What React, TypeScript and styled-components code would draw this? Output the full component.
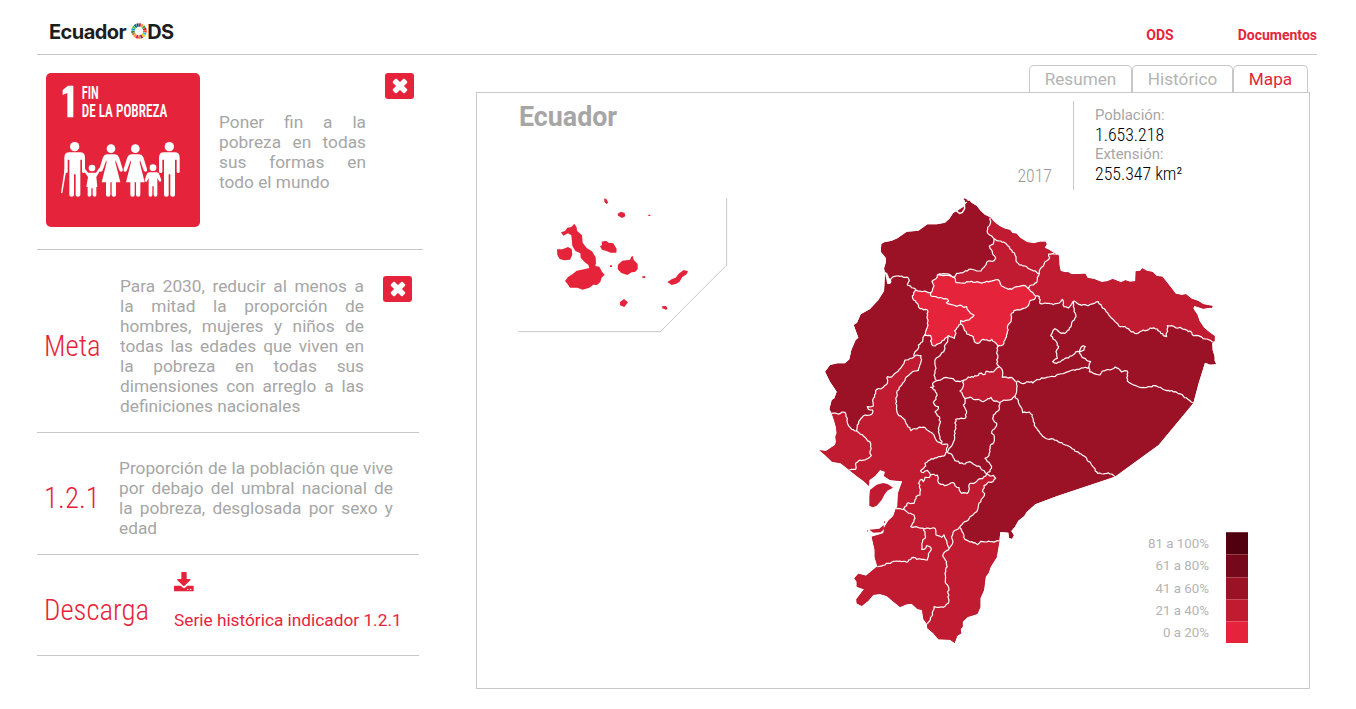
import React from 'react';
import styled, { createGlobalStyle } from 'styled-components';

const red = '#e5243b';
const line = '#c8c8c8';
const grey = '#a6a6a6';
const level = ['#e5243b', '#c01b30', '#9b1125', '#76081b', '#510010'];

const Global = createGlobalStyle`
  * { box-sizing: border-box; }
  body { margin: 0; background: #fff; font-family: Roboto, sans-serif; color: ${grey}; }
  p, h1, h2 { margin: 0; }
`;

const condensed = `
  font-family: 'Roboto Condensed', Roboto, sans-serif;
  font-stretch: condensed;
`;

const Page = styled.div`
  width: 1356px;
  height: 709px;
  padding: 0 39px 0 37px;
  overflow: hidden;
`;

const Header = styled.header`
  display: flex;
  justify-content: space-between;
  height: 55px;
  border-bottom: 1px solid ${line};
`;

const Brand = styled.div`
  display: flex;
  align-items: flex-start;
  padding: 20px 0 0 12px;
  font: 650 20px/25px Inter, 'Liberation Sans', sans-serif;
  letter-spacing: -0.55px;
  color: #1d1d1f;
  svg { margin: 3px 0 0 5px; }
`;

const Nav = styled.nav`
  display: flex;
  gap: 64px;
  padding-top: 25px;
  font-weight: 700;
  font-size: 14px;
  line-height: 20px;
  color: ${red};
`;

const Columns = styled.main`
  display: flex;
  justify-content: space-between;
`;

const Sidebar = styled.aside`
  width: 386px;
`;

const Section = styled.section<{ $h: number; $w?: number }>`
  display: flex;
  width: ${(p) => p.$w ?? 382}px;
  height: ${(p) => p.$h}px;
  border-bottom: 1px solid ${line};
`;

const Card = styled.div`
  flex: none;
  width: 154px;
  height: 154px;
  margin: 18px 19px 0 9px;
  border-radius: 5px;
  background: ${red};
  overflow: hidden;
`;

const Copy = styled.p<{ $w: number; $top: number }>`
  flex: none;
  width: ${(p) => p.$w}px;
  padding-top: ${(p) => p.$top}px;
  font-size: 17.28px;
  line-height: 20px;
  text-align: justify;
`;

const Close = styled.button<{ $top: number }>`
  display: flex;
  align-items: center;
  justify-content: center;
  width: 29px;
  height: 26px;
  margin: ${(p) => p.$top}px 0 0 19px;
  padding: 0;
  border: 0;
  border-radius: 3px;
  background: ${red};
`;

const Label = styled.h2<{ $w: number; $top: number }>`
  flex: none;
  width: ${(p) => p.$w}px;
  padding: ${(p) => p.$top}px 0 0 7px;
  ${condensed}
  font-weight: 300;
  font-size: 28.8px;
  line-height: 36px;
  color: ${red};
`;

const Download = styled.div`
  display: flex;
  flex-direction: column;
  padding-top: 17px;
  font-size: 17.28px;
  line-height: 20px;
  color: ${red};
  white-space: nowrap;
  svg { margin-bottom: 18px; }
`;

const Viewer = styled.div`
  width: 834px;
  margin-right: 7px;
  padding-top: 10px;
`;

const Tabs = styled.div`
  display: flex;
  justify-content: flex-end;
  padding-right: 2px;
`;

const Tab = styled.div<{ $w: number; $active?: boolean }>`
  width: ${(p) => p.$w}px;
  height: 27px;
  border: 1px solid ${line};
  border-bottom: 0;
  border-radius: 5px 5px 0 0;
  font-size: 17.2px;
  line-height: 27px;
  text-align: center;
  color: ${(p) => (p.$active ? red : '#b4b4b4')};
`;

const Panel = styled.div`
  height: 597px;
  border: 1px solid ${line};
`;

const PanelHead = styled.div`
  display: flex;
  height: 97px;
  padding-left: 42px;
`;

const Title = styled.h1`
  flex: 1;
  padding-top: 8px;
  font-weight: 700;
  font-size: 26.8px;
  line-height: 32px;
`;

const Year = styled.div`
  padding: 71px 21px 0 0;
  ${condensed}
  font-weight: 300;
  font-size: 17.8px;
  line-height: 24px;
  color: #999;
`;

const Facts = styled.dl`
  width: 236px;
  height: 89px;
  margin: 8px 0 0;
  padding: 4px 0 0 21px;
  border-left: 1px solid ${line};
  dt { font-size: 14.9px; line-height: 20px; }
  dd {
    margin: 0;
    ${condensed}
    font-weight: 300;
    font-size: 17.8px;
    line-height: 19px;
    color: #000;
  }
`;

const Maps = styled.div`
  display: flex;
  align-items: flex-start;
`;

const Islands = styled.svg`
  flex: none;
  margin: -10px 70px 0 23px;
`;

const Mainland = styled.svg`
  flex: none;
`;

const Legend = styled.div`
  display: flex;
  flex: none;
  width: 110px;
  margin: 342px 0 0 -82px;
  justify-content: flex-end;
  gap: 17px;
`;

const Ranges = styled.div`
  padding-top: 1px;
  font-size: 13.3px;
  line-height: 22.3px;
  text-align: right;
  white-space: nowrap;
  color: #b4b4b4;
`;

const Swatches = styled.div`
  width: 22px;
`;

const Swatch = styled.div<{ $c: string }>`
  height: 22.3px;
  background: ${(p) => p.$c};
  border-top: 1px solid rgba(255, 255, 255, 0.22);
`;

const wheelColors = [
  '#e5243b', '#dda63a', '#4c9f38', '#c5192d', '#ff3a21', '#26bde2', '#fcc30b', '#a21942', '#fd6925',
  '#dd1367', '#fd9d24', '#bf8b2e', '#3f7e44', '#0a97d9', '#56c02b', '#00689d', '#19486a',
];

function Wheel() {
  const step = 360 / 17;
  const circumference = 2 * Math.PI * 6;
  return (
    <svg width="16" height="16" viewBox="-8 -8 16 16">
      {wheelColors.map((c, i) => (
        <circle
          key={c}
          r="6"
          fill="none"
          stroke={c}
          strokeWidth="3.6"
          strokeDasharray={`${circumference / 17 - 0.3} ${circumference}`}
          transform={`rotate(${i * step - 90})`}
        />
      ))}
    </svg>
  );
}

function Cross() {
  return (
    <svg width="16" height="16" viewBox="-8 -8 16 16" fill="#fff">
      <rect x="-8.3" y="-2.7" width="16.6" height="5.4" rx="1.2" transform="rotate(45)" />
      <rect x="-8.3" y="-2.7" width="16.6" height="5.4" rx="1.2" transform="rotate(-45)" />
    </svg>
  );
}

function Man({ x }: { x: number }) {
  return (
    <g transform={`translate(${x} 0)`}>
      <circle cx="0" cy="221" r="14" />
      <path d="M-16 238H16Q31 238 31 254V296Q31 300 27 300Q22 300 22 296V260H17V366Q17 371 10 371Q3 371 3 366V304H-2V366Q-2 371-9 371Q-16 371-16 366V260H-21V296Q-21 300-26 300Q-31 300-31 296V254Q-31 238-16 238Z" />
    </g>
  );
}

function Woman({ x }: { x: number }) {
  return (
    <g transform={`translate(${x} 0)`}>
      <circle cx="0" cy="227" r="13" />
      <path d="M-12 244H12Q20 244 24 253L35 288Q37 294 32 296Q27 297 25 292L14 262L13 268L28 328H15V366Q15 371 9 371Q2 371 2 366V328H-2V366Q-2 371-8 371Q-15 371-15 366V328H-28L-13 268L-14 262L-25 292Q-27 297-32 296Q-37 294-35 288L-24 253Q-20 244-12 244Z" />
    </g>
  );
}

const GoalText = styled.g`
  ${condensed}
  font-weight: 600;
  font-size: 55px;
`;

function GoalArt() {
  return (
    <svg width="154" height="154" viewBox="0 0 462 462" fill="#fff">
      <path d="M66 38H82V133H64V60L50 66V51Z" />
      <GoalText>
        <text x="107" y="78" textLength="51" lengthAdjust="spacingAndGlyphs">FIN</text>
        <text x="107" y="133" textLength="257" lengthAdjust="spacingAndGlyphs">DE LA POBREZA</text>
      </GoalText>
      <Man x={86} />
      <path d="M56 288L61 290L49 360H45Z" />
      <Woman x={195} />
      <Woman x={268} />
      <Man x={370} />
      <circle cx="138" cy="285" r="10" />
      <path d="M115 284L126 299H150L160 284L165 288L151 312L154 342H151V367Q151 371 146 371Q141 371 140 367V346H136V367Q135 371 130 371Q125 371 125 367V342H121L126 312L111 290Z" />
      <circle cx="321" cy="284" r="10" />
      <path d="M309 298H333Q338 298 341 307L346 322Q344 328 340 326L334 315V366Q334 371 329 371Q323 371 323 366V340H319V366Q319 371 313 371Q308 371 308 366V315L302 326Q298 328 296 322L301 307Q304 298 309 298Z" />
    </svg>
  );
}

function DownloadIcon() {
  return (
    <svg width="20" height="20" viewBox="0 0 60 60" fill={red}>
      <path d="M24 0H36Q38 0 38 2V21H48Q51 22 49 25L31 42Q30 43 28 42L10 25Q8 22 11 21H22V2Q22 0 24 0Z" />
      <path d="M2 41H20L27 47Q30 49 33 47L40 41H57Q59 41 59 43V56Q59 58 57 58H2Q0 58 0 56V43Q0 41 2 41Z" />
      <path d="M39 51h4v3h-4zM48 51h4v3h-4z" fill="#fff" />
    </svg>
  );
}

const coast =
  '463,28 472,33 478,31 485,38 500,47 512,62 525,74 541,82 552,95 568,108 585,116 600,120 607,129 620,131 630,143 652,157 672,160 690,155 707,155 710,163 704,173 718,180 733,190 747,195 748,225 752,243 765,247 775,247 785,253 805,252 826,251 833,264 852,267 875,276 892,274 908,267 918,271 933,277 946,271 960,275 976,274 977,244 990,243 997,235 1010,242 1028,246 1040,258 1057,260 1070,276 1084,294 1097,311 1115,315 1128,313 1145,326 1165,333 1180,343 1208,348 1206,353 1192,354 1180,356 1152,347 1150,356 1162,374 1168,392 1182,413 1200,428 1214,438 1214,453 1207,460 1208,480 1214,500 1214,512 1219,523 1200,524 1185,518 1166,580 1150,640 1046,765 915,860 742,918 676,943 650,966 643,978 625,992 615,1010 604,1023 612,1036 606,1047 597,1044 595,1028 571,1026 568,1055 560,1102 542,1130 536,1148 527,1160 522,1200 511,1225 511,1252 502,1272 473,1281 458,1295 458,1310 452,1317 454,1330 442,1337 434,1359 420,1349 385,1348 370,1330 352,1315 351,1302 340,1287 336,1260 322,1257 305,1241 290,1243 270,1251 247,1232 230,1218 210,1212 190,1214 175,1232 155,1248 140,1240 139,1228 162,1198 140,1190 140,1175 133,1165 145,1151 168,1157 202,1129 194,1102 194,1080 185,1040 220,1030 223,1012 235,992 250,978 257,957 262,950 264,910 277,874 240,870 222,858 225,845 210,840 195,858 178,870 177,888 160,872 140,858 115,838 92,820 66,815 45,795 28,781 48,783 75,765 78,755 76,740 80,730 78,712 72,690 65,670 58,658 65,630 73,625 80,605 60,575 45,545 60,525 82,520 105,520 118,508 124,480 137,450 145,443 131,405 141,398 152,373 180,357 205,330 222,303 225,250 222,235 228,215 228,205 212,185 214,162 222,157 245,152 262,145 290,125 325,122 352,103 380,103 405,98 418,86 430,68 442,62 460,50 466,38';

// Breaks long segments into short, slightly offset steps so borders read as surveyed lines.
function meander(points: string): string {
  const pts = points.split(' ').map((p) => p.split(',').map(Number));
  const out: string[] = [];
  pts.forEach(([x, y], i) => {
    out.push(`${x},${y}`);
    const next = pts[i + 1];
    if (!next) return;
    const dx = next[0] - x;
    const dy = next[1] - y;
    const len = Math.hypot(dx, dy);
    const steps = Math.floor(len / 5);
    for (let s = 1; s < steps; s += 1) {
      const t = s / steps;
      const noise = Math.sin(x * 12.9898 + y * 78.233 + s * 37.719) * 43758.5453;
      const off = (noise - Math.floor(noise) - 0.5) * 4.4;
      out.push(`${(x + dx * t - (dy / len) * off).toFixed(1)},${(y + dy * t + (dx / len) * off).toFixed(1)}`);
    }
  });
  return out.join(' ');
}

const guayasNorth = meander('140,723 142,705 150,690 165,675 186,672 188,660 175,658 172,650 190,648 190,625 197,610 200,598 212,597 220,592 232,580 232,560 240,562 250,555 265,543 275,530 285,510 300,505 313,500');
const losRios = meander('313,500 322,495 333,497 333,515 325,541 308,545 290,560 275,585 260,608 258,630 260,660 267,677 285,690 292,705 303,722 325,713 345,713 355,722 372,735 380,753 395,762 413,762');
const chimborazoWest = meander('413,762 410,775 412,785 402,798 385,800 355,812 345,820 347,828 332,842 340,848 352,841 358,848 362,855');
const canarSouth = meander('362,855 382,855 387,880 404,887 418,882 430,878 435,887 447,893 455,910 472,910 480,880 492,880 505,868 518,866 530,852');
const azuayEast = meander('530,852 540,858 550,856 557,865 549,875 535,876 522,887 518,905 524,911 513,930 505,950 500,965 480,980 475,990 460,998 448,1012');
const zamoraNorth = meander('448,1012 460,1030 465,1048 480,1056 495,1058 502,1064 512,1054 530,1056 568,1053');
const esmeraldasEast = meander('541,82 541,100 533,112 533,130 545,138 552,146 550,162 538,168 545,180 550,195 557,205 552,212 535,213 525,228 513,243 500,243 482,237 462,246 440,250 433,262');
const imbaburaSouth = meander('433,262 438,278 455,279 480,275 510,278 540,274 552,271 567,271 575,288 590,295 605,298 622,290 640,286 652,293');
const pichinchaEast = meander('652,293 662,304 677,318');
const napoNorth = meander('677,318 688,320 690,340 710,340 730,344 748,339 757,328 762,350 775,354 785,343 792,333 810,344 835,347 865,335 875,350 895,373 915,395 930,410 945,410 960,422 980,431 1000,420 1010,421 1020,414 1042,417 1052,430 1070,440 1072,407 1085,407 1098,414 1110,412 1125,418 1135,425 1140,423 1150,437 1165,437 1185,447 1212,457');
const pichinchaSouth = meander('677,318 673,328 660,332 655,347 630,360 612,362 605,370 603,395 594,405 592,430 585,450 578,465 563,470 555,457 545,448 540,453 525,450 515,450 503,460 493,455 490,440 470,432 460,410 452,402');
const domingoSouth = meander('452,402 445,410 434,422 438,430 433,445 425,441 415,437 405,445 390,460 375,468 365,463 362,437 342,437');
const domingoWest = meander('342,437 347,425 354,405 353,375 352,360 330,356 325,345 311,330 307,318 318,300');
const domingoNorth = meander('318,300 330,303 345,303 355,308 363,308');
const pichinchaWest = meander('363,308 368,296 372,287 366,274 378,266 382,255 400,257 420,257 433,262');
const tungurahua = meander('462,570 475,561 500,558 508,550 525,553 528,544 550,546 557,538 568,530 577,540 577,562 600,562 610,567 620,577 620,600 615,618 605,628 582,630 570,637 550,632 543,622 525,632 515,634 505,628 490,628 480,621 465,626 458,615 450,603 460,588 458,577 462,570');

const sharedBorders = [
  guayasNorth, losRios, chimborazoWest, canarSouth, azuayEast, zamoraNorth, esmeraldasEast, imbaburaSouth,
  pichinchaEast, napoNorth, pichinchaSouth, domingoSouth, domingoWest, domingoNorth, pichinchaWest, tungurahua,
];

const innerBorders = [
  '552,146 560,152 572,153 590,163 605,180 615,195 618,213 628,225 645,228 665,240 688,250',
  '747,195 735,192 716,192 719,203 705,215 700,228 688,242 688,250 682,262 680,278 665,285 652,293',
  '232,255 236,275 240,280 244,265 260,258 275,258 280,262 295,264 298,272 292,285 310,294 318,300',
  '382,255 400,251 420,254 433,262',
  '363,308 363,318 385,324 412,327 416,333 409,338 435,347 455,347 461,352 470,350 478,365 492,376 478,390 460,395 452,392 452,402',
  '790,333 790,350 792,365 798,380 785,398 783,410 765,430 750,428 735,416 722,437 735,450 746,470 738,485 742,505 728,515 740,520 765,505 785,498 803,484 810,485 822,480 826,470 820,467 812,475 808,485 815,500 830,511 842,515 837,528 838,545 850,550 870,555 877,543 900,540 915,531 930,540 935,546 952,543 952,573 965,582 980,588 995,593 1020,590 1035,587 1065,600 1095,605 1120,618 1150,638',
  '620,573 635,580 665,575 668,579 680,569 710,562 730,560 750,552 775,545 800,538 820,534 838,532',
  '615,620 625,632 632,650 638,668 658,666 667,675 670,695 680,715 690,730 712,747 730,747 745,755 775,768 800,785 830,805 845,825 863,850 880,852 890,850 905,852 915,860',
  '563,470 563,480 560,490 563,505 560,520 568,530',
  '380,572 395,568 408,562 425,565 437,574 450,575 462,570',
  '415,440 413,455 405,465 403,480 390,497 375,510 375,525 378,535 372,555 380,572',
  '342,437 338,455 325,465 325,475 315,485 313,500',
  '380,572 368,580 372,590 362,592 375,600 380,610 378,628 370,638 375,646 385,650 382,660 375,665 380,672 388,680 390,700 385,715 390,740 395,760',
  '465,626 465,640 460,645 470,665 465,685 437,688 436,710 433,750 425,768 412,785 428,797 435,812 460,822 480,815 495,825 510,830 530,852',
  '570,637 567,660 550,675 550,690 560,700 558,710 548,720 545,730 552,735 552,755 540,770 540,785 537,797 525,805 540,822 545,830 540,845 530,852',
  '362,855 358,862 345,862 340,875 336,868 328,875 328,890 332,900 330,915 318,920 312,940 295,938 280,958',
  '257,957 280,958 290,965 312,975 315,985 302,1010 320,1010 340,1015 375,1015 378,1035 395,1042 402,1035 410,1052 418,1075',
  '448,1012 430,1025 425,1040 428,1050 425,1065 418,1075 405,1085 398,1098 410,1115 412,1130 407,1140 407,1180 415,1190 415,1240 400,1252 372,1250 368,1275 352,1302',
  '340,1015 345,1025 345,1045 338,1050 336,1068 335,1078 347,1075 350,1067 362,1072 362,1082 355,1092 352,1110 335,1108 320,1108 310,1102 290,1117 260,1113 235,1120 202,1130',
  '65,670 90,671 96,666 105,667 112,685 112,698 125,718 140,723 160,738 170,748 182,760 182,780 180,790 184,797 165,810 150,810 137,820 137,838 118,840',
].map(meander);

const borders = [...sharedBorders, ...innerBorders];

const northEast = `${esmeraldasEast} ${imbaburaSouth} ${pichinchaEast} ${napoNorth} 1300,457 1300,0 541,0`;
const southWest = `65,670 90,671 96,666 105,667 112,685 112,698 125,718 ${guayasNorth} ${losRios} ${chimborazoWest} ${canarSouth} ${azuayEast} ${zamoraNorth} 700,1053 700,1400 0,1400 0,670`;
const capital = `${pichinchaWest} ${imbaburaSouth} ${pichinchaEast} ${pichinchaSouth} ${domingoSouth} ${domingoWest} ${domingoNorth}`;

function MainlandMap() {
  return (
    <Mainland width="410" height="460" viewBox="0 0 1230 1380">
      <clipPath id="coast">
        <polygon points={coast} />
      </clipPath>
      <g clipPath="url(#coast)">
        <polygon points={coast} fill={level[2]} />
        <polygon points={northEast} fill={level[1]} />
        <polygon points={southWest} fill={level[1]} />
        <polygon points={tungurahua} fill={level[1]} />
        <polygon points={capital} fill={level[0]} />
        <g fill="none" stroke="#fff" strokeWidth="3.6" strokeLinejoin="round">
          {borders.map((b) => (
            <polyline key={b} points={b} />
          ))}
        </g>
        <path d="M224 245L232 250L235 262L242 268L240 282L232 282Z" fill="#fff" />
      </g>
      <path d="M462 27L470 31L467 42L464 56L458 67L450 71L440 64" fill="none" stroke={level[2]} strokeWidth="5" />
      <path d="M470 36L463 42L464 56L457 67L449 70L439 63" fill="none" stroke="#fff" strokeWidth="4.5" />
      <g fill={level[1]}>
        <path d="M180 900L200 884L220 879L234 883L249 893L232 902L224 913L215 930L200 947L188 952L178 947L178 920Z" />
        <path d="M178 1019L208 1016L221 1005L222 1018L212 1027L190 1028ZM222 993L226 996L222 1000ZM170 1022L174 1021L174 1025Z" />
      </g>
    </Mainland>
  );
}

function IslandsMap() {
  return (
    <Islands width="240" height="160" viewBox="0 0 720 480">
      <path d="M55 455H481L680 255V54" fill="none" stroke={line} strokeWidth="3" />
      <g fill={red}>
        <path d="M183 157L195 153L202 143L214 141L223 131L230 142L231 152L246 166L248 188L260 204L276 214L287 232L288 250L286 258L298 260L306 275L314 284L305 293L301 306L291 315L280 314L268 323L248 329L232 323L210 323L202 311L195 303L204 291L219 281L230 272L252 268L268 264L265 255L253 245L242 233L241 220L226 213L217 197L214 166L204 160L190 167Z" />
        <path d="M171 208L187 208L204 201L215 207L217 225L210 239L193 241L179 237L172 225Z" />
        <path d="M305 185L318 182L326 188L340 190L350 207L349 218L332 218L319 213L306 209L300 199L306 195Z" />
        <path d="M354 254L367 242L390 239L394 230L398 227L401 239L413 252L413 268L405 276L395 277L382 285L364 279L353 268Z" />
        <path d="M502 306L516 297L527 293L536 281L551 270L564 274L560 283L547 291L538 306L529 311L515 315Z" />
        <path d="M360 366L372 357L384 367L373 381L360 376Z" />
        <path d="M486 379L498 378L503 386L498 389L487 385Z" />
        <path d="M313 55L319 57L325 68L319 72L313 65Z" />
        <path d="M353 101L363 95L374 99L376 109L366 114L354 107Z" />
        <path d="M445 104h6v4h-6zM330 256h6v5h-6zM427 289h9v5h-9z" />
      </g>
    </Islands>
  );
}

export default function App() {
  return (
    <Page>
      <Global />
      <Header>
        <Brand>
          Ecuador
          <Wheel />
          DS
        </Brand>
        <Nav>
          <span>ODS</span>
          <span>Documentos</span>
        </Nav>
      </Header>
      <Columns>
        <Sidebar>
          <Section $h={195} $w={386}>
            <Card>
              <GoalArt />
            </Card>
            <Copy $w={147} $top={57}>Poner fin a la pobreza en todas sus formas en todo el mundo</Copy>
            <Close $top={18}>
              <Cross />
            </Close>
          </Section>
          <Section $h={183}>
            <Label $w={83} $top={78}>Meta</Label>
            <Copy $w={244} $top={26}>
              Para 2030, reducir al menos a la mitad la proporción de hombres, mujeres y niños de todas las edades que
              viven en la pobreza en todas sus dimensiones con arreglo a las definiciones nacionales
            </Copy>
            <Close $top={26}>
              <Cross />
            </Close>
          </Section>
          <Section $h={122}>
            <Label $w={82} $top={47}>1.2.1</Label>
            <Copy $w={274} $top={25}>
              Proporción de la población que vive por debajo del umbral nacional de la pobreza, desglosada por sexo y
              edad
            </Copy>
          </Section>
          <Section $h={101}>
            <Label $w={137} $top={37}>Descarga</Label>
            <Download>
              <DownloadIcon />
              Serie histórica indicador 1.2.1
            </Download>
          </Section>
        </Sidebar>
        <Viewer>
          <Tabs>
            <Tab $w={103}>Resumen</Tab>
            <Tab $w={101}>Histórico</Tab>
            <Tab $w={75} $active>Mapa</Tab>
          </Tabs>
          <Panel>
            <PanelHead>
              <Title>Ecuador</Title>
              <Year>2017</Year>
              <Facts>
                <dt>Población:</dt>
                <dd>1.653.218</dd>
                <dt>Extensión:</dt>
                <dd>255.347 km²</dd>
              </Facts>
            </PanelHead>
            <Maps>
              <IslandsMap />
              <MainlandMap />
              <Legend>
                <Ranges>
                  <div>81 a 100%</div>
                  <div>61 a 80%</div>
                  <div>41 a 60%</div>
                  <div>21 a 40%</div>
                  <div>0 a 20%</div>
                </Ranges>
                <Swatches>
                  {[...level].reverse().map((c) => (
                    <Swatch key={c} $c={c} />
                  ))}
                </Swatches>
              </Legend>
            </Maps>
          </Panel>
        </Viewer>
      </Columns>
    </Page>
  );
}
